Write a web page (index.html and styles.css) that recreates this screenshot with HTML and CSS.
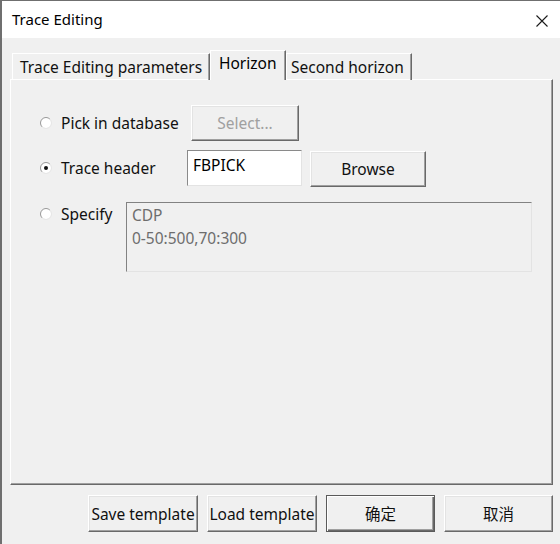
FILE: index.html
```html
<!DOCTYPE html>
<html lang="en">
<head>
    <meta charset="UTF-8" />
    <title>Trace Editing</title>
    <link rel="stylesheet" href="styles.css">
</head>
<body>
    <div class="window">
        <div class="titlebar">
            <span class="title">Trace Editing</span>
            <svg class="close" width="12" height="12" viewBox="0 0 12 12">
                <path d="M0.5 0.5 L11.5 11.5 M11.5 0.5 L0.5 11.5" stroke="#1a1a1a" stroke-width="1.1" fill="none"/>
            </svg>
        </div>

        <div class="content">
            <div class="tabs">
                <div class="tab tab-params">Trace Editing parameters</div>
                <div class="tab tab-active">Horizon</div>
                <div class="tab tab-second">Second horizon</div>
            </div>

            <div class="panel">
                <div class="row row-db">
                    <label class="option opt-db">
                        <svg class="radio" width="12" height="12" viewBox="0 0 12 12">
                            <circle cx="6" cy="6" r="5" fill="#fff"/>
                            <path d="M2.1 9.9 A5.5 5.5 0 0 1 9.9 2.1" stroke="#9a9a9a" fill="none"/>
                            <path d="M9.9 2.1 A5.5 5.5 0 0 1 2.1 9.9" stroke="#e6e6e6" fill="none"/>
                        </svg>
                        <span>Pick in database</span>
                    </label>
                    <button class="btn btn-select" disabled>Select...</button>
                </div>

                <div class="row row-header">
                    <label class="option opt-header">
                        <svg class="radio" width="12" height="12" viewBox="0 0 12 12">
                            <circle cx="6" cy="6" r="5" fill="#fff"/>
                            <path d="M2.1 9.9 A5.5 5.5 0 0 1 9.9 2.1" stroke="#9a9a9a" fill="none"/>
                            <path d="M9.9 2.1 A5.5 5.5 0 0 1 2.1 9.9" stroke="#e6e6e6" fill="none"/>
                            <circle cx="6" cy="6" r="2" fill="#111"/>
                        </svg>
                        <span>Trace header</span>
                    </label>
                    <div class="field">FBPICK</div>
                    <button class="btn btn-browse">Browse</button>
                </div>

                <div class="row row-specify">
                    <label class="option opt-specify">
                        <svg class="radio" width="12" height="12" viewBox="0 0 12 12">
                            <circle cx="6" cy="6" r="5" fill="#fff"/>
                            <path d="M2.1 9.9 A5.5 5.5 0 0 1 9.9 2.1" stroke="#9a9a9a" fill="none"/>
                            <path d="M9.9 2.1 A5.5 5.5 0 0 1 2.1 9.9" stroke="#e6e6e6" fill="none"/>
                        </svg>
                        <span>Specify</span>
                    </label>
                    <div class="memo">CDP<br>0-50:500,70:300</div>
                </div>
            </div>

            <div class="actions">
                <button class="btn btn-action">Save template</button>
                <button class="btn btn-action">Load template</button>
                <button class="btn btn-action btn-default">确定</button>
                <button class="btn btn-action btn-cancel">取消</button>
            </div>
        </div>
    </div>
</body>
</html>
```

FILE: styles.css
```css
body {
    margin: 0;
    padding: 0;
    font-family: "Noto Sans", "Noto Sans CJK SC", sans-serif;
    font-size: 15.5px;
    color: #111;
    background-color: #f0f0f0;
}
.window {
    width: 560px;
    height: 544px;
    box-sizing: border-box;
    border-top: 1px solid #6f6f6f;
    border-left: 2px solid #6f6f6f;
    background-color: #f0f0f0;
}
.titlebar {
    height: 37px;
    background-color: #fff;
    display: flex;
    align-items: center;
    justify-content: space-between;
    padding: 0 12px 0 10px;
    font-size: 15px;
}
.title {
    color: #000;
    margin-top: -1px;
}
.close {
    margin-top: 2px;
}
.content {
    padding: 12px 7px 0 8px;
}
.tabs {
    display: flex;
    align-items: flex-end;
    height: 30px;
    margin-left: 2px;
    margin-bottom: -1px;
    position: relative;
    z-index: 1;
}
.tab {
    box-sizing: border-box;
    height: 27px;
    border-top: 1px solid #fff;
    border-left: 1px solid #fff;
    border-right: 1px solid #696969;
    box-shadow: inset -1px 0 #a0a0a0;
    padding: 1px 0 0 7px;
    line-height: 24px;
    white-space: nowrap;
}
.tab-params {
    width: 198px;
}
.tab-active {
    width: 76px;
    height: 30px;
    padding: 0 0 0 8px;
    line-height: 24px;
    background-color: #f0f0f0;
    color: #000;
}
.tab-second {
    width: 126px;
    padding-left: 4px;
}
.panel {
    box-sizing: border-box;
    height: 406px;
    border-top: 1px solid #fff;
    border-left: 1px solid #fff;
    border-right: 1px solid #696969;
    border-bottom: 1px solid #696969;
    box-shadow: inset -1px -1px #a0a0a0;
    padding: 25px 0 0 29px;
}
.row {
    display: flex;
    align-items: center;
}
.option {
    display: flex;
    align-items: center;
    gap: 9px;
    white-space: nowrap;
}
.opt-db {
    width: 151px;
}
.opt-header {
    width: 147px;
}
.opt-specify {
    width: 86px;
    align-self: flex-start;
    padding-top: 1px;
}
.radio {
    flex-shrink: 0;
}
.btn {
    box-sizing: border-box;
    font-family: "Noto Sans", "Noto Sans CJK SC", sans-serif;
    font-size: 15.5px;
    color: #111;
    background-color: #f0f0f0;
    border-top: 1px solid #fff;
    border-left: 1px solid #fff;
    border-right: 1px solid #696969;
    border-bottom: 1px solid #696969;
    box-shadow: inset -1px -1px #a0a0a0, inset 1px 1px #e3e3e3;
    padding: 0;
    height: 36px;
    white-space: nowrap;
}
.btn-select {
    width: 108px;
    color: #a0a0a0;
}
.row-header {
    margin-top: 8px;
}
.field {
    box-sizing: border-box;
    width: 115px;
    height: 36px;
    background-color: #fff;
    border-top: 1px solid #8a8a8a;
    border-left: 1px solid #8a8a8a;
    border-right: 1px solid #e3e3e3;
    border-bottom: 1px solid #e3e3e3;
    padding: 3px 0 0 5px;
    line-height: 22px;
    color: #000;
}
.btn-browse {
    width: 116px;
    margin-left: 8px;
    margin-top: 2px;
}
.row-specify {
    margin-top: 15px;
    align-items: flex-start;
}
.memo {
    box-sizing: border-box;
    width: 406px;
    height: 70px;
    border-top: 1px solid #828282;
    border-left: 1px solid #828282;
    border-right: 1px solid #e3e3e3;
    border-bottom: 1px solid #e3e3e3;
    padding: 1px 0 0 5px;
    line-height: 23px;
    color: #6d6d6d;
}
.actions {
    display: flex;
    justify-content: flex-end;
    gap: 9px;
    margin-top: 10px;
}
.btn-action {
    width: 110px;
    height: 37px;
}
.btn-default {
    width: 109px;
    border: 1px solid #5a5a5a;
    box-shadow: inset 1px 1px #fff, inset -1px -1px #696969, inset -2px -2px #a0a0a0;
}
.btn-cancel {
    width: 109px;
}
```
